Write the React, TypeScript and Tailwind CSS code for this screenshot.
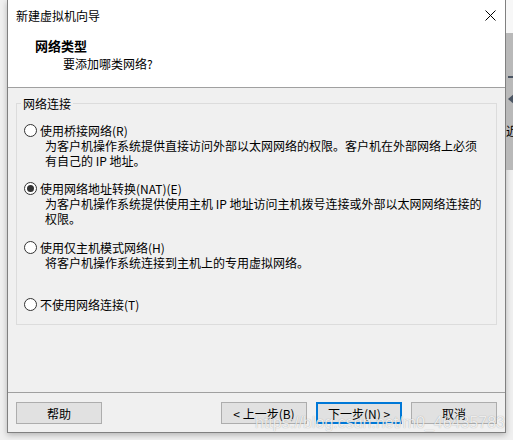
import React from "react";

const font = "font-['Noto_Sans_CJK_SC','Microsoft_YaHei',sans-serif]";

function Radio({ checked }: { checked?: boolean }) {
  return (
    <span className="w-[13px] h-[13px] shrink-0 rounded-full border border-[#333333] bg-white flex items-center justify-center">
      {checked && <span className="w-[7px] h-[7px] rounded-full bg-[#333333]" />}
    </span>
  );
}

function Option({
  checked,
  label,
  lines,
  className,
}: {
  checked?: boolean;
  label: string;
  lines: string[];
  className?: string;
}) {
  return (
    <div className={className}>
      <div className="flex items-start">
        <Radio checked={checked} />
        <span className="ml-[3px] leading-[15px] -mt-px whitespace-nowrap">{label}</span>
      </div>
      {lines.map((l) => (
        <div key={l} className="pl-[21px] leading-[15px] whitespace-nowrap">
          {l}
        </div>
      ))}
    </div>
  );
}

function Btn({ children, primary }: { children: React.ReactNode; primary?: boolean }) {
  return (
    <div
      className={
        "w-[86px] h-[22px] bg-[#e1e1e1] flex items-center justify-center text-[12px] leading-[15px] whitespace-nowrap " +
        (primary ? "border-2 border-[#0078d7]" : "border border-[#adadad]")
      }
    >
      {children}
    </div>
  );
}

export default function App() {
  return (
    <div className={"relative w-[513px] h-[440px] overflow-hidden bg-[#f0f0f0] flex text-black text-[12px] " + font}>
      <div className="w-[7px] shrink-0" />
      <div className="w-[499px] h-[433px] shrink-0 flex flex-col border-x border-b border-[#808080] bg-[#f0f0f0] shadow-[0_2px_6px_rgba(0,0,0,0.25)]">
        <div className="bg-white h-[87px] flex flex-col">
          <div className="h-[31px] flex items-center justify-between pl-[8px] pr-[9px]">
            <span className="leading-[15px]">新建虚拟机向导</span>
            <svg width="11" height="11" viewBox="0 0 11 11">
              <path d="M0.5 0.5 L10.5 10.5 M10.5 0.5 L0.5 10.5" stroke="#000" strokeWidth="1" />
            </svg>
          </div>
          <div className="pl-[27px] pt-[7px]">
            <div className="text-[13px] font-bold leading-[16px]">网络类型</div>
            <div className="ml-[28px] mt-[2px] leading-[15px]">要添加哪类网络?</div>
          </div>
        </div>
        <div className="h-px bg-[#a0a0a0]" />
        <div className="flex-1 px-[8px] pt-[8px]">
          <fieldset className="border border-[#dcdcdc] m-0 p-0 min-w-0">
            <legend className="ml-[4px] px-[2px] leading-[15px]">网络连接</legend>
            <div className="pl-[7px] pt-[13px] pb-[12px]">
              <Option
                label="使用桥接网络(R)"
                lines={[
                  "为客户机操作系统提供直接访问外部以太网网络的权限。客户机在外部网络上必须",
                  "有自己的 IP 地址。",
                ]}
              />
              <Option
                className="mt-[14px]"
                checked
                label="使用网络地址转换(NAT)(E)"
                lines={[
                  "为客户机操作系统提供使用主机 IP 地址访问主机拨号连接或外部以太网网络连接的",
                  "权限。",
                ]}
              />
              <Option
                className="mt-[15px]"
                label="使用仅主机模式网络(H)"
                lines={["将客户机操作系统连接到主机上的专用虚拟网络。"]}
              />
              <Option className="mt-[28px]" label="不使用网络连接(T)" lines={[]} />
            </div>
          </fieldset>
        </div>
        <div className="h-px bg-[#a0a0a0]" />
        <div className="flex justify-between px-[8px] pt-[9px] pb-[8px]">
          <Btn>帮助</Btn>
          <div className="flex gap-[9px]">
            <Btn>&lt; 上一步(B)</Btn>
            <Btn primary>下一步(N) &gt;</Btn>
            <Btn>取消</Btn>
          </div>
        </div>
      </div>
      <div className="w-[7px] shrink-0 flex flex-col overflow-hidden">
        <div className="h-[33px] bg-[#f7f7f7]" />
        <div className="h-[137px] bg-[#b9b9b9] flex flex-col pl-[2px]">
          <div className="mt-[43px] h-[2px] w-[6px] bg-[#4b5563]" />
          <div className="mt-[16px] w-0 h-0 border-y-[5px] border-y-transparent border-r-[6px] border-r-[#4b5563]" />
          <div className="mt-[19px] -ml-[2px] leading-[15px] whitespace-nowrap">近</div>
        </div>
      </div>
      <div className="absolute left-[255px] top-[415px] text-[16px] leading-none font-['Liberation_Sans',sans-serif] text-white/80 [text-shadow:0_0_1px_rgba(0,0,0,0.35)] whitespace-nowrap">
        https://blog.csdn.net/m0_46435783
      </div>
    </div>
  );
}
